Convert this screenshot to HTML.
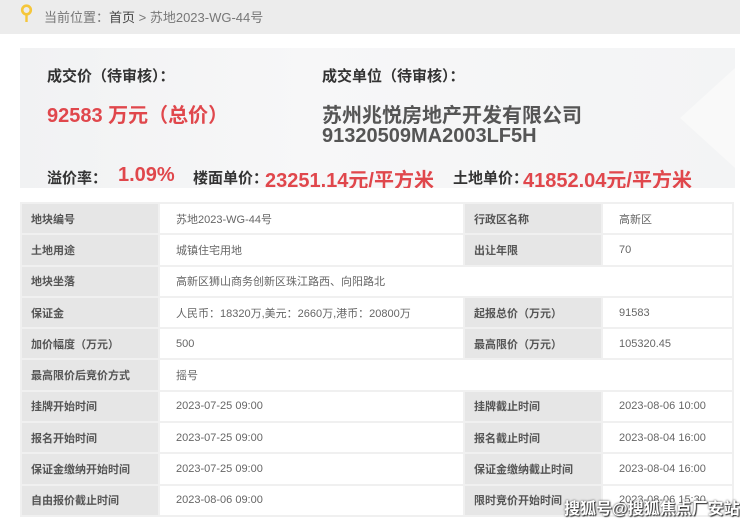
<!DOCTYPE html>
<html><head><meta charset="utf-8"><style>
*{margin:0;padding:0;box-sizing:border-box}
body{width:740px;height:522px;overflow:hidden;background:#fff;font-family:"Liberation Sans","Noto Sans CJK SC",sans-serif;position:relative}
.top{position:absolute;left:0;top:0;width:740px;height:34px;background:#ececec}
.top .t{position:absolute;left:44px;top:7px;font-size:13px;color:#777}
.top .t b{font-weight:normal;color:#444}
.card{position:absolute;left:20px;top:48px;width:715px;height:140px;background:linear-gradient(90deg,#f1f2f3,#f7f7f8 40%,#f3f4f5 100%);overflow:hidden}
.a{position:absolute;white-space:nowrap}
.lab{font-size:15px;font-weight:bold;color:#333}
.red{color:#e0474c;font-weight:bold;font-size:20px}
.gr{color:#555;font-weight:bold;font-size:20px}
table{position:absolute;left:20px;top:202px;width:714px;border-collapse:collapse;font-size:11px;color:#666}
td{height:31.3px;border:2px solid #f0f0f0;padding:0}
td.l{background:#e6e6e6;color:#555;font-weight:bold;padding-left:9px}
td.v{padding-left:16px}
.wm{position:absolute;left:564px;top:495px;font-size:16px;color:#fff;font-weight:bold;text-shadow:0 0 2px #333,1px 1px 1px #333;white-space:nowrap}
</style></head><body>
<div class="top">
<svg style="position:absolute;left:20px;top:4px" width="13" height="19" viewBox="0 0 13 19"><circle cx="6.5" cy="6" r="4.3" fill="none" stroke="#f5c63a" stroke-width="2.6"/><rect x="5.3" y="10" width="2.4" height="8" fill="#f5c63a"/></svg>
<div class="t">当前位置：<b>首页</b> &gt; 苏地2023-WG-44号</div>
</div>
<div class="card">
<svg style="position:absolute;right:0;top:0" width="140" height="140"><polygon points="140,20 140,120 85,70" fill="#f9f9f9"/></svg>
<div class="a lab" style="left:27px;top:17px">成交价（待审核）：</div>
<div class="a red" style="left:27px;top:51px">92583 万元（总价）</div>
<div class="a lab" style="left:302px;top:17px">成交单位（待审核）：</div>
<div class="a gr" style="left:302px;top:51px">苏州兆悦房地产开发有限公司</div>
<div class="a gr" style="left:302px;top:77px">91320509MA2003LF5H</div>
<div class="a lab" style="left:27px;top:119px">溢价率：</div>
<div class="a red" style="left:98px;top:116px">1.09%</div>
<div class="a lab" style="left:173px;top:119px">楼面单价：</div>
<div class="a red" style="left:245px;top:116px">23251.14元/平方米</div>
<div class="a lab" style="left:433px;top:119px">土地单价：</div>
<div class="a red" style="left:503px;top:116px">41852.04元/平方米</div>
</div>
<table>
<colgroup><col style="width:138px"><col style="width:305px"><col style="width:138px"><col></colgroup>
<tr><td class="l">地块编号</td><td class="v">苏地2023-WG-44号</td><td class="l">行政区名称</td><td class="v">高新区</td></tr>
<tr><td class="l">土地用途</td><td class="v">城镇住宅用地</td><td class="l">出让年限</td><td class="v">70</td></tr>
<tr><td class="l">地块坐落</td><td class="v" colspan="3">高新区狮山商务创新区珠江路西、向阳路北</td></tr>
<tr><td class="l">保证金</td><td class="v">人民币：18320万,美元：2660万,港币：20800万</td><td class="l">起报总价（万元）</td><td class="v">91583</td></tr>
<tr><td class="l">加价幅度（万元）</td><td class="v">500</td><td class="l">最高限价（万元）</td><td class="v">105320.45</td></tr>
<tr><td class="l">最高限价后竞价方式</td><td class="v" colspan="3">摇号</td></tr>
<tr><td class="l">挂牌开始时间</td><td class="v">2023-07-25 09:00</td><td class="l">挂牌截止时间</td><td class="v">2023-08-06 10:00</td></tr>
<tr><td class="l">报名开始时间</td><td class="v">2023-07-25 09:00</td><td class="l">报名截止时间</td><td class="v">2023-08-04 16:00</td></tr>
<tr><td class="l">保证金缴纳开始时间</td><td class="v">2023-07-25 09:00</td><td class="l">保证金缴纳截止时间</td><td class="v">2023-08-04 16:00</td></tr>
<tr><td class="l">自由报价截止时间</td><td class="v">2023-08-06 09:00</td><td class="l">限时竞价开始时间</td><td class="v">2023-08-06 15:30</td></tr>
</table>
<div class="wm">搜狐号@搜狐焦点厂安站</div>
</body></html>
